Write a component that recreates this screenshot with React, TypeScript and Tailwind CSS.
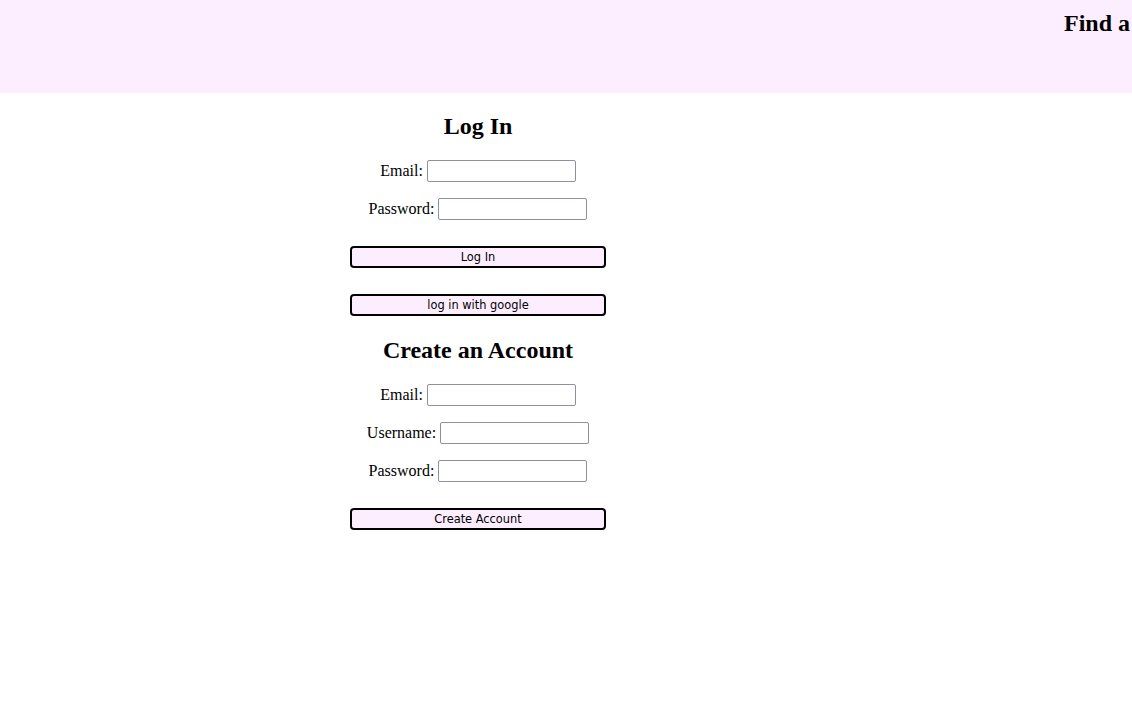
import React from "react";

const serif = { fontFamily: '"Liberation Serif", "Times New Roman", serif' };

function Row({ label, mt }: { label: string; mt: string }) {
  return (
    <div className={`flex h-[22px] items-center justify-center gap-[4px] ${mt}`}>
      <label className="text-[16px] leading-[18px] text-black">{label}</label>
      <input
        type="text"
        className="h-[22px] w-[149px] rounded-[2px] border border-[#8f8f9d] bg-white px-1 outline-none"
      />
    </div>
  );
}

function Btn({ children, mt }: { children: React.ReactNode; mt: string }) {
  return (
    <button
      className={`flex h-[22px] w-[256px] items-center justify-center rounded-[4px] border-2 border-black bg-[#fdeeff] pt-[2px] text-[11.4px] leading-none text-black ${mt}`}
      style={{ fontFamily: '"DejaVu Sans", sans-serif' }}
    >
      {children}
    </button>
  );
}

export default function App() {
  return (
    <div className="min-h-[706px] w-[1132px] overflow-hidden bg-white" style={serif}>
      <header className="h-[93px] w-full overflow-hidden bg-[#fdeeff]">
        <h1 className="ml-[1064px] whitespace-nowrap pt-[9px] text-[24px] font-bold leading-[28px] text-black">
          Find a
        </h1>
      </header>
      <main className="ml-[350px] flex w-[256px] flex-col">
        <h2 className="mt-[19px] text-center text-[24px] font-bold leading-[28px] text-black">Log In</h2>
        <Row label="Email:" mt="mt-[20px]" />
        <Row label="Password:" mt="mt-[16px]" />
        <Btn mt="mt-[26px]">Log In</Btn>
        <Btn mt="mt-[26px]">log in with google</Btn>
        <h2 className="mt-[20px] text-center text-[24px] font-bold leading-[28px] text-black">Create an Account</h2>
        <Row label="Email:" mt="mt-[20px]" />
        <Row label="Username:" mt="mt-[16px]" />
        <Row label="Password:" mt="mt-[16px]" />
        <Btn mt="mt-[26px]">Create Account</Btn>
      </main>
    </div>
  );
}
